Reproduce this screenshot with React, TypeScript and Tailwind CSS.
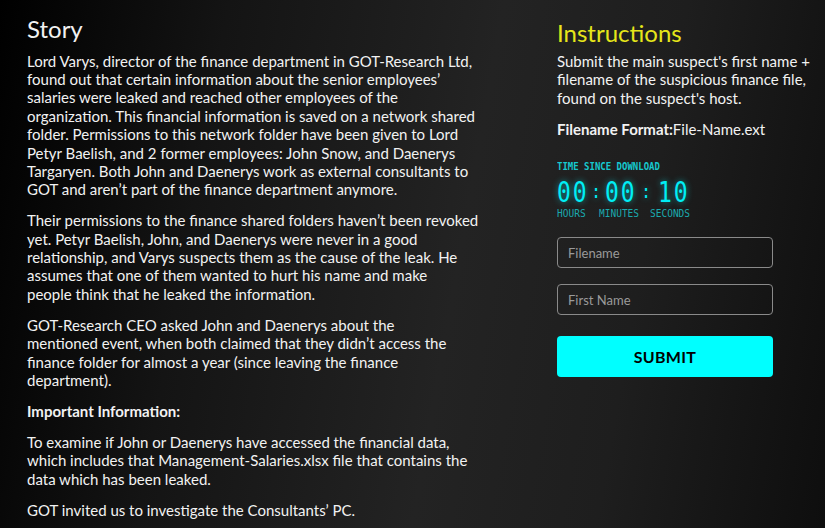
import React from "react";

const body = "font-['Lato','Liberation_Sans',sans-serif]";

const Clock = () => {
  const digital = "font-['DejaVu_Sans_Mono',monospace] text-[#00eef5] [text-shadow:0_0_6px_rgba(0,238,245,0.6)]";
  return (
    <div className="mt-[22px]">
      <p className="font-['DejaVu_Sans_Mono',monospace] font-bold text-[9px] leading-[12px] text-[#16c9cf] uppercase scale-y-125 origin-left">
        Time since download
      </p>
      <div className={`mt-[5px] flex items-center text-[23px] leading-[30px] scale-y-125 origin-left ${digital}`}>
        <span className="w-[32px] tracking-[2px]">00</span>
        <span className="w-[14px] text-[16px] text-center">:</span>
        <span className="w-[35px] pl-[2px] tracking-[2px]">00</span>
        <span className="w-[16px] text-[16px] text-center">:</span>
        <span className="pl-[4px] tracking-[2px]">10</span>
      </div>
      <div className="mt-[1px] flex text-[9.5px] font-['DejaVu_Sans_Mono',monospace] text-[#1aa9ae] uppercase leading-[12px] scale-y-110 origin-left">
        <span className="w-[42px]">Hours</span>
        <span className="w-[51px]">Minutes</span>
        <span>Seconds</span>
      </div>
    </div>
  );
};

export default function App() {
  return (
    <div
      className={`w-[825px] h-[528px] overflow-hidden text-[#f2f2f2] bg-[linear-gradient(100deg,#000000_0%,#141414_25%,#232323_55%,#1e1e1e_75%,#0e0e0e_100%)] ${body}`}
    >
      <div className="flex pt-[14px]">
        {/* story */}
        <div className="ml-[27px] w-[470px] text-[15px] leading-[18.4px]">
          <h1 className="text-[24px] leading-[30px] mb-[7.5px]">Story</h1>
          <p className="mb-[12.5px]">
            Lord Varys, director of the finance department in GOT-Research Ltd,
            <br />
            found out that certain information about the senior employees’
            <br />
            salaries were leaked and reached other employees of the
            <br />
            organization. This financial information is saved on a network shared
            <br />
            folder. Permissions to this network folder have been given to Lord
            <br />
            Petyr Baelish, and 2 former employees: John Snow, and Daenerys
            <br />
            Targaryen. Both John and Daenerys work as external consultants to
            <br />
            GOT and aren’t part of the finance department anymore.
          </p>
          <p className="mb-[12.5px]">
            Their permissions to the finance shared folders haven’t been revoked
            <br />
            yet. Petyr Baelish, John, and Daenerys were never in a good
            <br />
            relationship, and Varys suspects them as the cause of the leak. He
            <br />
            assumes that one of them wanted to hurt his name and make
            <br />
            people think that he leaked the information.
          </p>
          <p className="mb-[12.5px]">
            GOT-Research CEO asked John and Daenerys about the
            <br />
            mentioned event, when both claimed that they didn’t access the
            <br />
            finance folder for almost a year (since leaving the finance
            <br />
            department).
          </p>
          <p className="mb-[12.5px] font-bold">Important Information:</p>
          <p className="mb-[12.5px]">
            To examine if John or Daenerys have accessed the financial data,
            <br />
            which includes that Management-Salaries.xlsx file that contains the
            <br />
            data which has been leaked.
          </p>
          <p>GOT invited us to investigate the Consultants’ PC.</p>
        </div>

        {/* instructions */}
        <div className="ml-[60px] w-[256px] pt-[4px]">
          <h2 className="text-[24px] leading-[30px] text-[#e6e61a] mb-[4px]">Instructions</h2>
          <p className="text-[15px] leading-[18.4px]">
            Submit the main suspect's first name + filename of the suspicious finance file, found on the suspect's
            host.
          </p>
          <p className="mt-[13px] text-[15px] leading-[18px]">
            <span className="font-bold">Filename Format:</span>File-Name.ext
          </p>
          <Clock />
          <div className="w-[216px] mt-[17px] flex flex-col gap-[16px]">
            <input
              placeholder="Filename"
              className="h-[31px] rounded-[4px] border border-[#8a8a8a] bg-transparent px-[10px] text-[13px] placeholder:text-[#9a9a9a] outline-none"
            />
            <input
              placeholder="First Name"
              className="h-[31px] rounded-[4px] border border-[#8a8a8a] bg-transparent px-[10px] text-[13px] placeholder:text-[#9a9a9a] outline-none"
            />
            <button className="mt-[5px] h-[41px] rounded-[4px] bg-[#00ffff] text-black font-bold text-[16px] tracking-[0.3px]">
              SUBMIT
            </button>
          </div>
        </div>
      </div>
    </div>
  );
}
